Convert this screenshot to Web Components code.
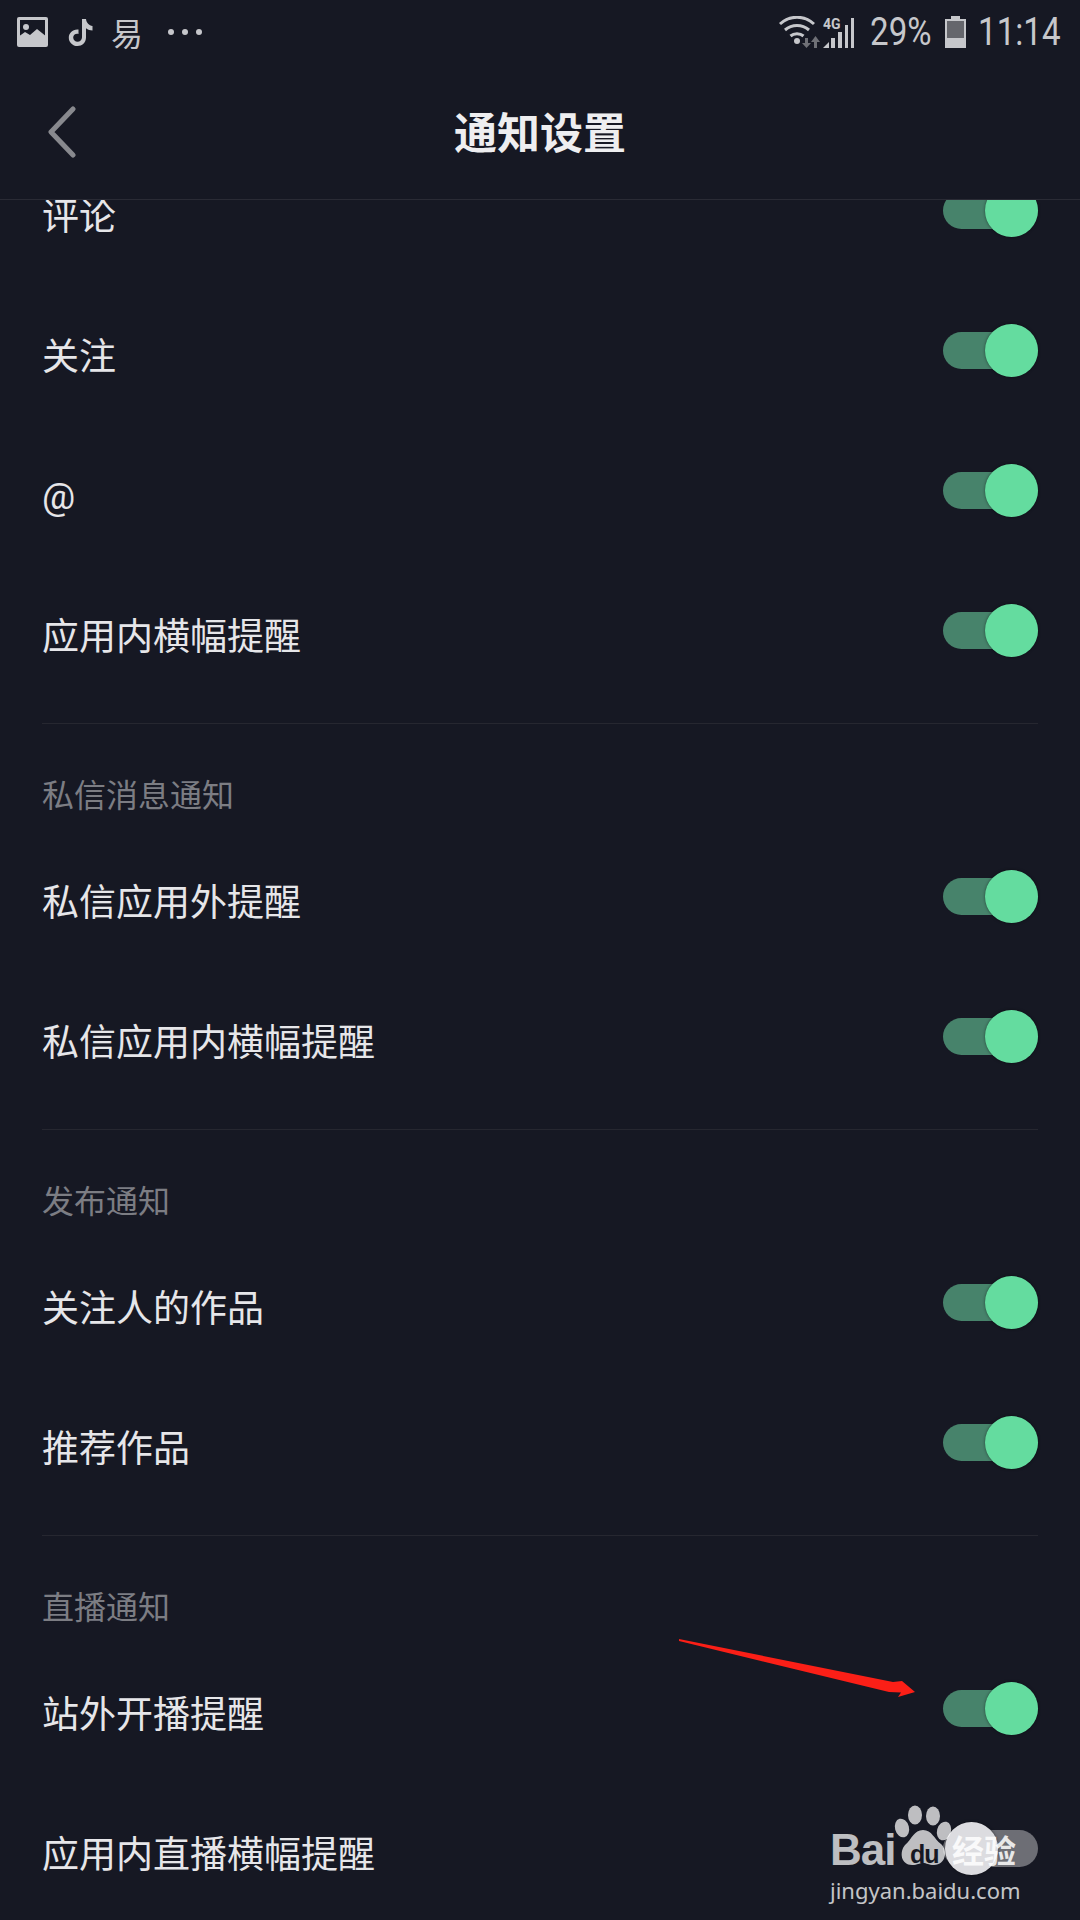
<!DOCTYPE html>
<html lang="zh">
<head>
<meta charset="utf-8">
<title>通知设置</title>
<style>
    html, body { margin: 0; padding: 0; background: #161823; }
</style>
</head>
<body>
<app-screen>
    <status-bar slot="top"></status-bar>
    <nav-bar slot="top" title="通知设置"></nav-bar>

    <setting-section>
        <setting-row label="评论"></setting-row>
        <setting-row label="关注"></setting-row>
        <setting-row label="@" latin></setting-row>
        <setting-row label="应用内横幅提醒"></setting-row>
    </setting-section>
    <setting-section title="私信消息通知">
        <setting-row label="私信应用外提醒"></setting-row>
        <setting-row label="私信应用内横幅提醒"></setting-row>
    </setting-section>
    <setting-section title="发布通知">
        <setting-row label="关注人的作品"></setting-row>
        <setting-row label="推荐作品"></setting-row>
    </setting-section>
    <setting-section title="直播通知" last>
        <setting-row label="站外开播提醒"></setting-row>
        <setting-row label="应用内直播横幅提醒" off></setting-row>
    </setting-section>

    <red-arrow slot="over"></red-arrow>
    <baidu-mark slot="over"></baidu-mark>
</app-screen>

<script>
class AppScreen extends HTMLElement {
    constructor() {
        super();
        this.attachShadow({ mode: 'open' });
        this.shadowRoot.innerHTML = `
            <style>
                :host {
                    display: flex;
                    flex-direction: column;
                    position: relative;
                    width: 1080px;
                    height: 1920px;
                    overflow: hidden;
                    background: #161823;
                    color: #e6e6e9;
                    font-family: "Noto Sans CJK SC", "Noto Sans", sans-serif;
                }
                .list {
                    flex: 1;
                    overflow: hidden;
                }
                /* the list is scrolled by 60px, the first row is cut by the bar */
                .scroller {
                    margin-top: -60px;
                }
            </style>
            <slot name="top"></slot>
            <div class="list"><div class="scroller"><slot></slot></div></div>
            <slot name="over"></slot>
        `;
    }
}

class StatusBar extends HTMLElement {
    constructor() {
        super();
        this.attachShadow({ mode: 'open' });
        this.shadowRoot.innerHTML = `
            <style>
                :host {
                    display: flex;
                    align-items: center;
                    justify-content: space-between;
                    height: 64px;
                    padding: 0 20px 0 17px;
                    color: #c6c7cb;
                }
                .side {
                    display: flex;
                    align-items: center;
                }
                svg { display: block; }
                .app {
                    font-size: 32px;
                    line-height: 36px;
                    width: 34px;
                    margin-left: 17px;
                    margin-right: 22px;
                    text-align: center;
                }
                .num {
                    display: inline-block;
                    font-family: Roboto, sans-serif;
                    font-size: 39px;
                    line-height: 44px;
                    transform: scaleX(.85);
                    transform-origin: left center;
                    white-space: nowrap;
                    color: #c6c7cb;
                }
                /* scaleX does not change the box, so take the spare width back */
                .pct { margin-left: 14px; margin-right: -11px; }
                .clock { margin-left: 12px; margin-right: -15px; }
                .battery { margin-left: 13px; }
            </style>
            <div class="side">
                <svg width="31" height="30" viewBox="0 0 31 30">
                    <rect width="31" height="30" rx="2" fill="#c6c7cb"/>
                    <rect x="3" y="3" width="25" height="22" fill="#161823"/>
                    <circle cx="9" cy="10" r="3" fill="#c6c7cb"/>
                    <path d="M1 28V20L8 15L13 18L20 12L30 20V28Z" fill="#c6c7cb"/>
                </svg>
                <svg style="margin-left:20px" width="25" height="30" viewBox="0 0 25 30">
                    <path d="M14 2H18C18.500 6 21 8.500 24.500 9V13.500C22 13.500 20 12.700 18 11.300V20.500C18 25.500 14 29 9.500 29C4.500 29 .8 25.200 .8 20.700C.8 15.700 5 11.800 10.500 12.500V17C7.500 16.300 5.200 18.200 5.200 20.600C5.200 23 7.200 24.800 9.500 24.800C12 24.800 14 23 14 20.300Z" fill="#c6c7cb"/>
                </svg>
                <span class="app">易</span>
                <svg width="40" height="10" viewBox="0 0 40 10">
                    <circle cx="5" cy="5" r="3" fill="#c6c7cb"/>
                    <circle cx="19" cy="5" r="3" fill="#c6c7cb"/>
                    <circle cx="33" cy="5" r="3" fill="#c6c7cb"/>
                </svg>
            </div>
            <div class="side">
                <svg width="42" height="32" viewBox="0 0 42 32" fill="none">
                    <path d="M2 8C12 -1 26 -1 36 8" stroke="#c6c7cb" stroke-width="3"/>
                    <path d="M7 14C14 8 24 8 31 14" stroke="#c6c7cb" stroke-width="3"/>
                    <path d="M12.500 20C16 17 22 17 25.500 20" stroke="#c6c7cb" stroke-width="3"/>
                    <circle cx="19" cy="25" r="3" fill="#c6c7cb"/>
                    <path d="M27 22H30V27H33L28.500 32L24 27H27Z" fill="#6f7076"/>
                    <path d="M36 32H39V26H42L37.500 20L33 26H36Z" fill="#6f7076"/>
                </svg>
                <svg style="margin-left:3px" width="33" height="32" viewBox="0 0 33 32">
                    <text x="0" y="13" font-family="Roboto, sans-serif" font-size="14" font-weight="700" fill="#c6c7cb">4G</text>
                    <path d="M0 32L6 26V32Z" fill="#c6c7cb"/>
                    <rect x="8" y="22" width="4" height="10" fill="#c6c7cb"/>
                    <rect x="15" y="16" width="4" height="16" fill="#c6c7cb"/>
                    <rect x="22" y="9" width="3" height="23" fill="#c6c7cb"/>
                    <rect x="28" y="2" width="3" height="30" fill="#c6c7cb"/>
                </svg>
                <span class="num pct">29%</span>
                <svg class="battery" width="21" height="32" viewBox="0 0 21 32">
                    <path d="M6 0H15V3H21V32H0V3H6Z" fill="#c6c7cb"/>
                    <rect x="2" y="5" width="17" height="17" fill="#65666c"/>
                </svg>
                <span class="num clock">11:14</span>
            </div>
        `;
    }
}

class NavBar extends HTMLElement {
    constructor() {
        super();
        this.attachShadow({ mode: 'open' });
        this.shadowRoot.innerHTML = `
            <style>
                :host {
                    display: flex;
                    align-items: center;
                    justify-content: center;
                    position: relative;
                    border-bottom: 1px solid #2a2b35;
                    box-sizing: border-box;
                    height: 136px;
                }
                .back {
                    position: absolute;
                    left: 47px;
                    top: 42px;
                }
                h1 {
                    margin: 0 0 4px;
                    font-size: 43px;
                    font-weight: 700;
                    color: #eeeef0;
                }
            </style>
            <svg class="back" width="30" height="52" viewBox="0 0 30 52" fill="none">
                <path d="M26 3L4 26L26 49" stroke="#88898e" stroke-width="5" stroke-linecap="round" stroke-linejoin="round"/>
            </svg>
            <h1>${this.getAttribute('title') || ''}</h1>
        `;
    }
}

class SettingSection extends HTMLElement {
    constructor() {
        super();
        this.attachShadow({ mode: 'open' });
        const title = this.getAttribute('title');
        this.shadowRoot.innerHTML = `
            <style>
                :host {
                    display: block;
                    margin: 0 42px;
                }
                :host(:not([last])) {
                    border-bottom: 1px solid #262730;
                    padding-bottom: 23px;
                }
                h2 {
                    margin: 0;
                    height: 102px;
                    padding-top: 48px;
                    box-sizing: border-box;
                    font-size: 32px;
                    line-height: 42px;
                    font-weight: 400;
                    color: #7c7d83;
                }
            </style>
            ${title ? `<h2>${title}</h2>` : ''}
            <slot></slot>
        `;
    }
}

class SettingRow extends HTMLElement {
    constructor() {
        super();
        this.attachShadow({ mode: 'open' });
        this.shadowRoot.innerHTML = `
            <style>
                :host {
                    display: flex;
                    align-items: center;
                    justify-content: space-between;
                    height: 140px;
                    font-size: 37px;
                }
                span {
                    padding-top: 7px;
                    font-family: Roboto, "Noto Sans CJK SC", sans-serif;
                }
                :host([latin]) span {
                    padding-top: 13px;
                }
            </style>
            <span>${this.getAttribute('label') || ''}</span>
            <toggle-switch ${this.hasAttribute('off') ? 'off' : ''}></toggle-switch>
        `;
    }
}

class ToggleSwitch extends HTMLElement {
    constructor() {
        super();
        this.attachShadow({ mode: 'open' });
        this.shadowRoot.innerHTML = `
            <style>
                :host {
                    display: flex;
                    align-items: center;
                    justify-content: flex-end;
                    width: 95px;
                    height: 53px;
                }
                .track {
                    display: flex;
                    align-items: center;
                    justify-content: flex-end;
                    width: 100%;
                    height: 37px;
                    border-radius: 19px;
                    background: #47836b;
                }
                :host([off]) .track {
                    justify-content: flex-start;
                    background: #6d6e75;
                }
                .knob {
                    width: 53px;
                    height: 53px;
                    flex: none;
                    border-radius: 50%;
                    background: #64dc9f;
                    box-shadow: 0 0 3px rgba(0, 0, 0, .5);
                }
                :host([off]) .knob {
                    margin-left: 2px;
                    background: #dcdce0;
                }
            </style>
            <div class="track"><div class="knob"></div></div>
        `;
    }
}

// sits on top of the screenshot, so it belongs on the free canvas
class RedArrow extends HTMLElement {
    constructor() {
        super();
        this.attachShadow({ mode: 'open' });
        this.shadowRoot.innerHTML = `
            <style>
                :host {
                    display: block;
                    position: absolute;
                    left: 0;
                    top: 0;
                }
                svg { display: block; }
            </style>
            <svg width="1080" height="1920" viewBox="0 0 1080 1920">
                <path d="M679 1639L893 1682L902 1681L915 1692L898 1697L901 1692.500L889 1692L679 1641Z" fill="#fb1f17"/>
            </svg>
        `;
    }
}

class BaiduMark extends HTMLElement {
    constructor() {
        super();
        this.attachShadow({ mode: 'open' });
        this.shadowRoot.innerHTML = `
            <style>
                :host {
                    display: block;
                    position: absolute;
                    left: 828px;
                    top: 1803px;
                    width: 200px;
                    height: 100px;
                    color: rgba(255, 255, 255, .72);
                }
                svg { position: absolute; left: 0; top: 0; }
                span { position: absolute; white-space: nowrap; }
                .bai {
                    left: 2px;
                    top: 29px;
                    font: 700 44px/36px "Liberation Sans", sans-serif;
                    letter-spacing: -1px;
                }
                .du {
                    left: 82px;
                    top: 41px;
                    font: 700 25px/20px "Liberation Sans", sans-serif;
                    color: #161823;
                    letter-spacing: -1px;
                }
                .jy {
                    left: 124px;
                    top: 29px;
                    font: 700 32px/34px "Noto Sans CJK SC", sans-serif;
                    color: rgba(255, 255, 255, .85);
                }
                .url {
                    left: 2px;
                    top: 73px;
                    font: 400 22px/28px "Noto Sans", sans-serif;
                    color: rgba(255, 255, 255, .75);
                }
            </style>
            <svg width="200" height="70" viewBox="0 0 200 70" fill="rgba(255,255,255,.72)">
                <ellipse cx="87" cy="12" rx="7" ry="9.500"/>
                <ellipse cx="105" cy="13" rx="7" ry="9.500"/>
                <ellipse cx="74" cy="25" rx="7" ry="9.500" transform="rotate(-15 74 25)"/>
                <ellipse cx="116" cy="28" rx="7" ry="9.500" transform="rotate(15 116 28)"/>
                <path d="M95 27C104 27 106 36 113 41C120 47 118 62 106 62C100 62 99 60 95 60C91 60 90 62 84 62C73 62 71 49 77 42C84 36 86 27 95 27Z"/>
            </svg>
            <span class="bai">Bai</span>
            <span class="du">du</span>
            <span class="jy">经验</span>
            <span class="url">jingyan.baidu.com</span>
        `;
    }
}

customElements.define('app-screen', AppScreen);
customElements.define('status-bar', StatusBar);
customElements.define('nav-bar', NavBar);
customElements.define('setting-section', SettingSection);
customElements.define('toggle-switch', ToggleSwitch);
customElements.define('setting-row', SettingRow);
customElements.define('red-arrow', RedArrow);
customElements.define('baidu-mark', BaiduMark);
</script>
</body>
</html>
